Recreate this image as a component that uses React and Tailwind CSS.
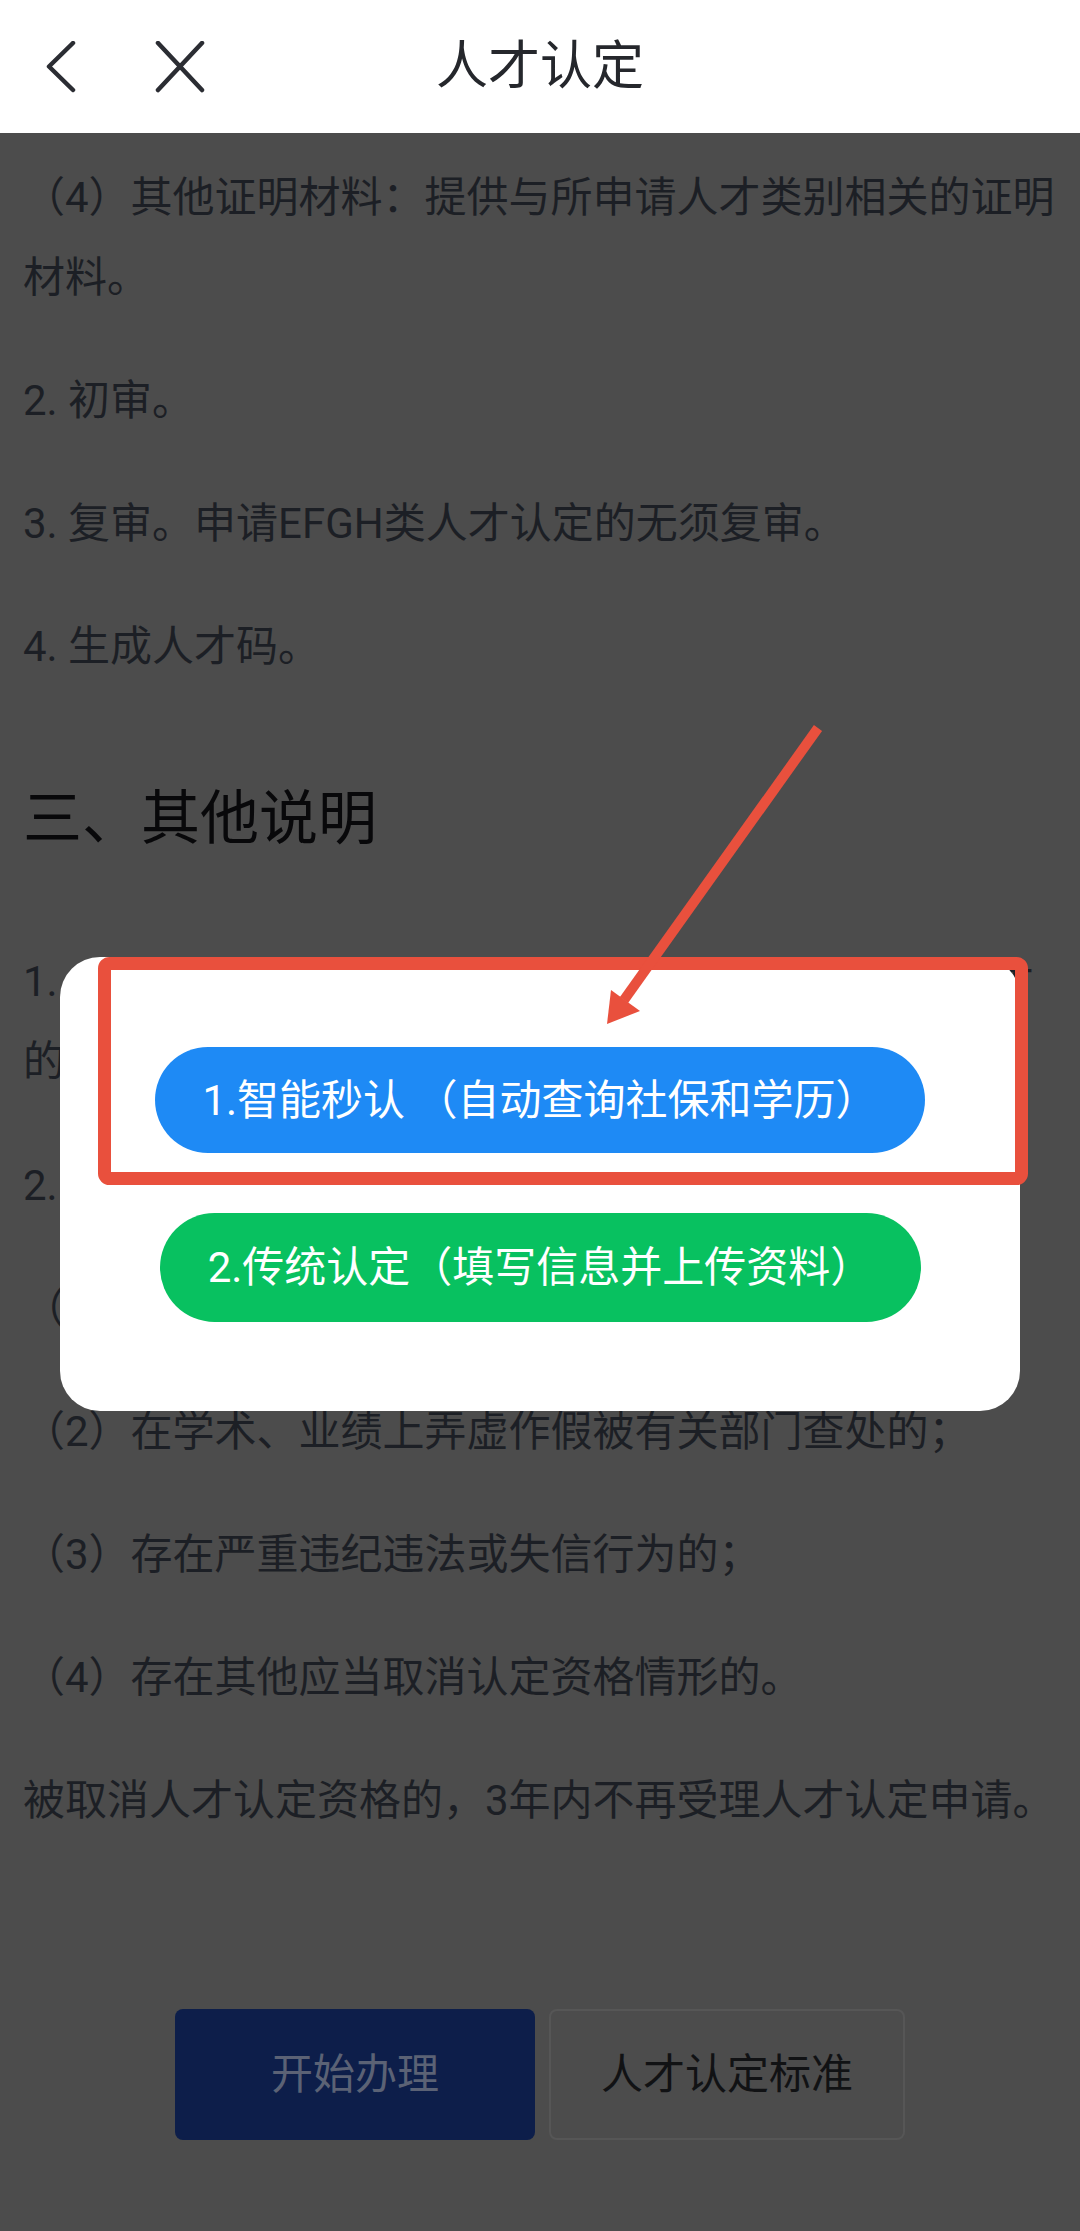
import React from 'react';

const paragraphs = [
  { text: '2. 初审。', mt: 'mt-[43px]' },
  { text: '3. 复审。申请EFGH类人才认定的无须复审。', mt: 'mt-[43px]' },
  { text: '4. 生成人才码。', mt: 'mt-[43px]' },
];

const notes = [
  { text: '2. 有下列情形之一的，取消其人才认定资格：', mt: 'mt-[44px]' },
  { text: '（1）以欺骗、贿赂等不正当手段取得人才认定的；', mt: 'mt-[43px]' },
  { text: '（2）在学术、业绩上弄虚作假被有关部门查处的；', mt: 'mt-[43px]' },
  { text: '（3）存在严重违纪违法或失信行为的；', mt: 'mt-[43px]' },
  { text: '（4）存在其他应当取消认定资格情形的。', mt: 'mt-[43px]' },
  { text: '被取消人才认定资格的，3年内不再受理人才认定申请。', mt: 'mt-[43px]' },
];

function Header() {
  return (
    <header className="grid h-[133px] grid-cols-[1fr_auto_1fr] items-center bg-white">
      <div className="flex items-center pl-[44px]">
        <svg width="32" height="52" viewBox="0 0 32 52" fill="none" aria-hidden="true">
          <polyline
            points="29,2 5,25.5 29,49"
            stroke="#2b2d33"
            strokeWidth="4.5"
            strokeLinecap="round"
            strokeLinejoin="round"
          />
        </svg>
        <svg className="ml-[79px]" width="50" height="52" viewBox="0 0 50 52" fill="none" aria-hidden="true">
          <path d="M3 2 L47 49 M47 2 L3 49" stroke="#2b2d33" strokeWidth="4.5" strokeLinecap="round" />
        </svg>
      </div>
      <h1 className="text-[52px] leading-none font-normal text-[#25272c]">人才认定</h1>
      <div />
    </header>
  );
}

function ChoiceDialog() {
  return (
    <div className="absolute left-[60px] top-[957px] flex h-[454px] w-[960px] flex-col items-center gap-[60px] rounded-[40px] bg-white pt-[90px]">
      <button
        type="button"
        className="flex h-[106px] w-[770px] items-center justify-center rounded-full bg-[#1e8af5] text-[42px] text-white"
      >
        1.智能秒认 （自动查询社保和学历）
      </button>
      <button
        type="button"
        className="flex h-[109px] w-[761px] items-center justify-center rounded-full bg-[#08c160] text-[42px] text-white"
      >
        2.传统认定（填写信息并上传资料）
      </button>
    </div>
  );
}

function Annotation() {
  return (
    <svg
      className="pointer-events-none absolute left-0 top-0"
      width="1080"
      height="2231"
      viewBox="0 0 1080 2231"
      fill="none"
      aria-hidden="true"
    >
      <rect x="104.5" y="963.5" width="917" height="215" rx="5" stroke="#e9503d" strokeWidth="13" />
      <line x1="818" y1="728" x2="624" y2="1000" stroke="#e9503d" strokeWidth="10" />
      <polygon points="607,1024 640,1011 611,990" fill="#e9503d" />
    </svg>
  );
}

export default function App() {
  return (
    <div className="relative min-h-[2231px] w-[1080px] overflow-hidden bg-[#4c4c4c] font-['Roboto','Noto_Sans_CJK_SC',sans-serif]">
      <Header />

      <main className="flex flex-col px-[23px] pt-[25px] text-[42px] leading-[80px] text-[#1c1f25]">
        <p>（4）其他证明材料：提供与所申请人才类别相关的证明材料。</p>
        {paragraphs.map((p) => (
          <p key={p.text} className={p.mt}>
            {p.text}
          </p>
        ))}

        <h2 className="mt-[92px] text-[59px] font-normal leading-[80px] text-[#08080a]">三、其他说明</h2>

        <p className="mt-[83px]">1. 人才码有效期为三年，期满后需重新申请。认定人才的相关待遇按有关政策执行。</p>
        {notes.map((n) => (
          <p key={n.text} className={n.mt}>
            {n.text}
          </p>
        ))}

        <div className="mt-[168px] flex justify-center gap-[14px]">
          <button
            type="button"
            className="flex h-[131px] w-[360px] items-center justify-center rounded-[8px] bg-[#0d1e4a] text-[42px] text-[#5b6275]"
          >
            开始办理
          </button>
          <button
            type="button"
            className="flex h-[131px] w-[356px] items-center justify-center rounded-[8px] border-2 border-[#565656] text-[42px] text-[#111214]"
          >
            人才认定标准
          </button>
        </div>
      </main>

      <ChoiceDialog />
      <Annotation />
    </div>
  );
}
